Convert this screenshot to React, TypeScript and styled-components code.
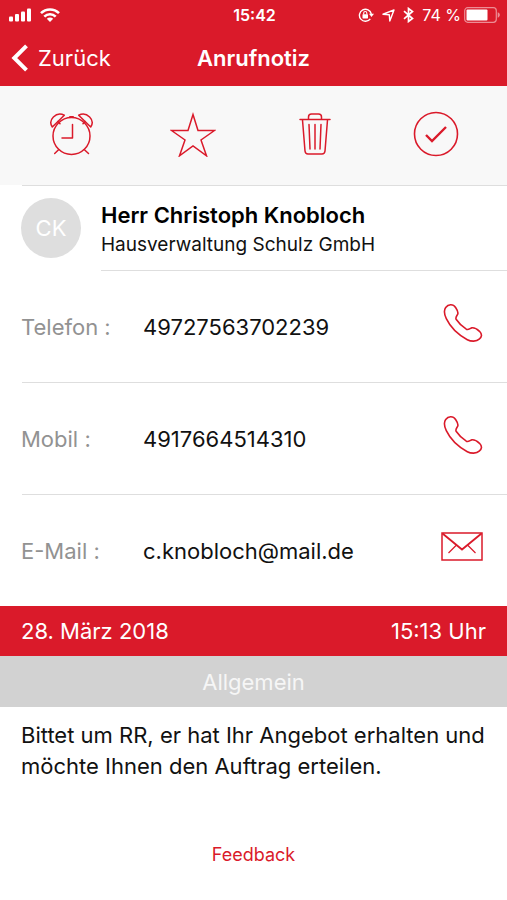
import React from "react";
import styled, { createGlobalStyle } from "styled-components";

const red = "#da1a2a";

const GlobalStyle = createGlobalStyle`
  * { box-sizing: border-box; }
  body {
    margin: 0;
    background: #fff;
    color: #111;
    font-family: Inter, "Liberation Sans", sans-serif;
    font-size: 22px;
  }
  button { font: inherit; color: inherit; background: none; border: 0; padding: 0; cursor: pointer; }
  a { color: inherit; text-decoration: none; }
  h1, h2, p, dl, dd { margin: 0; }
  svg { display: block; }
`;

const Header = styled.header`
  background: ${red};
  color: #fff;
`;

const StatusBar = styled.div`
  display: grid;
  grid-template-columns: 1fr auto 1fr;
  align-items: center;
  height: 30px;
  padding: 0 6px 0 8px;
  font-size: 16px;
`;

const StatusGroup = styled.div<{ $end?: boolean }>`
  display: flex;
  align-items: center;
  gap: 8px;
  justify-content: ${(p) => (p.$end ? "flex-end" : "flex-start")};
`;

const Clock = styled.time`
  font-weight: 600;
`;

const Battery = styled.span`
  display: flex;
  align-items: center;
  gap: 3px;
  white-space: nowrap;
`;

const NavBar = styled.nav`
  display: grid;
  grid-template-columns: 1fr auto 1fr;
  align-items: center;
  height: 56px;
  padding: 0 11px;
`;

const BackButton = styled.button`
  display: flex;
  align-items: center;
  gap: 10px;
  justify-self: start;
`;

const Title = styled.h1`
  font-size: 22px;
  font-weight: 600;
`;

const Toolbar = styled.div`
  display: grid;
  grid-template-columns: repeat(4, 1fr);
  place-items: center;
  height: 99px;
  padding: 0 10px 4px 11px;
  background: #f8f8f8;
`;

const ToolButton = styled.button`
  color: ${red};
`;

const Divider = styled.hr<{ $inset: number }>`
  height: 1px;
  margin: 0 0 0 ${(p) => p.$inset}px;
  border: 0;
  background: #dedede;
`;

const Contact = styled.section`
  display: flex;
  gap: 20px;
  height: 84px;
  padding: 12px 21px 0;
`;

const Avatar = styled.div`
  display: grid;
  place-items: center;
  flex: none;
  width: 60px;
  height: 60px;
  border-radius: 50%;
  background: #dedede;
  color: #fff;
`;

const Name = styled.h2`
  padding-top: 2px;
  font-size: 22px;
  font-weight: 600;
  line-height: 30px;
  color: #000;
`;

const Company = styled.p`
  font-size: 19px;
  line-height: 30px;
`;

const Row = styled.div`
  display: grid;
  grid-template-columns: 122px 1fr auto;
  align-items: center;
  height: 111px;
  padding: 0 24px 0 21px;
`;

const Label = styled.dt`
  color: #929292;
`;

const RowLink = styled.a`
  color: ${red};
  padding-bottom: 8px;
`;

const DateBand = styled.div`
  display: flex;
  align-items: center;
  justify-content: space-between;
  height: 50px;
  padding: 0 21px;
  background: ${red};
  color: #fff;
`;

const Category = styled.div`
  display: grid;
  place-items: center;
  height: 51px;
  background: #d2d2d2;
  color: #f6f6f6;
`;

const Message = styled.p`
  padding: 13px 21px 0;
  line-height: 31px;
`;

const Footer = styled.footer`
  display: flex;
  justify-content: center;
  padding: 61px 0 33px;
`;

const FeedbackButton = styled.button`
  color: ${red};
  font-size: 18px;
  line-height: 24px;
`;

const Signal = () => (
  <svg width="24" height="14" viewBox="0 0 24 14" fill="currentColor" aria-hidden="true">
    <rect x="1" y="8.5" width="4" height="5" rx="1" />
    <rect x="7" y="6" width="4" height="7.500" rx="1" />
    <rect x="13" y="3.500" width="4" height="10" rx="1" />
    <rect x="19" y="0.500" width="4" height="13" rx="1" />
  </svg>
);

const Wifi = () => (
  <svg width="20" height="14" viewBox="0 0 20 14" fill="none" stroke="currentColor" strokeWidth="2.600" aria-hidden="true">
    <path d="M1 5.200C6 .2 14 .2 19 5.200M4.300 8.600C7.500 5.400 12.500 5.400 15.700 8.600" />
    <path d="M10 14 6.800 10.700C8.600 9 11.400 9 13.200 10.700Z" fill="currentColor" stroke="none" />
  </svg>
);

const RotationLock = () => (
  <svg width="16" height="14" viewBox="0 0 16 14" fill="none" stroke="currentColor" strokeWidth="1.400" aria-hidden="true">
    <path d="M12.300 10.800A6 6 0 1 1 13.300 6" />
    <path d="M11 5.700h5l-2.500 3.300Z" fill="currentColor" stroke="none" />
    <rect x="4.500" y="6.200" width="5.500" height="4.200" rx=".6" fill="currentColor" stroke="none" />
    <path d="M5.700 6.500V5a1.550 1.550 0 0 1 3.100 0v1.500" strokeWidth="1.100" />
  </svg>
);

const LocationArrow = () => (
  <svg width="13" height="13" viewBox="0 0 13 13" fill="none" stroke="currentColor" strokeWidth="1.400" strokeLinejoin="round" aria-hidden="true">
    <path d="M12 1 7.800 12 7.300 5.700 1 5.200Z" />
  </svg>
);

const Bluetooth = () => (
  <svg width="11" height="16" viewBox="0 0 11 16" fill="none" stroke="currentColor" strokeWidth="1.700" aria-hidden="true">
    <path d="M1 4.200 9.500 11.500 5.500 14.500V1.500L9.500 4.500 1 11.800" />
  </svg>
);

const BatteryIcon = () => (
  <svg width="37" height="16" viewBox="0 0 37 16" fill="none" aria-hidden="true">
    <rect x=".7" y=".7" width="31.600" height="14.600" rx="3" stroke="#fff" strokeOpacity=".5" strokeWidth="1.200" />
    <rect x="2.500" y="2.500" width="21" height="11" rx="1" fill="#fff" />
    <path d="M33.700 5.300c2.800.8 2.800 4.600 0 5.400Z" fill="#fff" fillOpacity=".5" />
  </svg>
);

const BackChevron = () => (
  <svg width="17" height="28" viewBox="0 0 17 28" fill="none" stroke="currentColor" strokeWidth="4" aria-hidden="true">
    <path d="M15.500 1.800 3.300 14 15.500 26.200" />
  </svg>
);

const Alarm = () => (
  <svg width="46" height="46" viewBox="0 0 46 46" fill="none" stroke="currentColor" strokeWidth="1.500" strokeLinecap="round" strokeLinejoin="round" aria-hidden="true">
    <circle cx="22.500" cy="25" r="18.500" />
    <path d="M23.500 13.500v13.500H13" />
    <path d="M21 6h3" strokeWidth="2" />
    <path d="M3.300 16C-1.500 9 7 .3 15.300 4.200Z" />
    <path d="M41.700 16C46.500 9 38 .3 29.700 4.200Z" />
    <path d="M8.800 10.500 11 12.800M36.200 10.500 34 12.800M9.800 38.500 5.700 42.500M35.200 38.500 39.500 42.500" />
  </svg>
);

const Star = () => (
  <svg width="46" height="46" viewBox="0 0 46 46" fill="none" stroke="currentColor" strokeWidth="1.500" aria-hidden="true">
    <path d="M23 3.500 28 19.500H44.500L31 29 36.500 44.800 23 35 9.500 44.800 15 29 1.500 19.500H18Z" />
  </svg>
);

const Trash = () => (
  <svg width="32" height="44" viewBox="0 0 32 44" fill="none" stroke="currentColor" strokeWidth="1.500" strokeLinecap="round" strokeLinejoin="round" aria-hidden="true">
    <path d="M1 7.500H31M3.500 8 6 39c.2 2 1 3 3 3H23c2 0 2.800-1 3-3L28.500 8" />
    <path d="M9.500 7V5c0-2 1-3 3-3h7c2 0 3 1 3 3v2" />
    <path d="M10 12.500 11 37M16 12.500V37M22 12.500 21 37" />
  </svg>
);

const CheckCircle = () => (
  <svg width="46" height="46" viewBox="0 0 46 46" fill="none" stroke="currentColor" aria-hidden="true">
    <circle cx="23" cy="23" r="21.500" strokeWidth="1.600" />
    <path d="M13 24 19 30 33 16" strokeWidth="2.400" />
  </svg>
);

const Phone = () => (
  <svg width="40" height="40" viewBox="0 0 40 40" fill="none" stroke="currentColor" strokeWidth="1.600" strokeLinejoin="round" aria-hidden="true">
    <path d="M2.700 4.500C5.200 1.200 10 .5 12.600 4.500C14.300 7 15.700 9.400 14.600 11.400C13.800 13 12.300 14.300 13.100 16.200C15.300 19.500 20 24 23.300 26.200C25.200 27.300 26.800 25.500 28.500 24.900C31.500 24.300 34 26 36.500 28.300C39.500 31.400 38.800 34 36.200 36.200C33.500 38.800 28 38.600 24.300 36.700C15.500 32 7.500 24.500 3.300 15.700C1.500 11.900 .8 7.200 2.700 4.500Z" />
  </svg>
);

const Envelope = () => (
  <svg width="42" height="29" viewBox="0 0 42 29" fill="none" stroke="currentColor" strokeWidth="1.500" aria-hidden="true">
    <rect x="1" y="1" width="40" height="27" />
    <path d="M1.500 1.500 21 17.500 40.500 1.500" strokeWidth="1.800" />
    <path d="M15.500 13 7.500 21M26.500 13 34.500 21" strokeWidth="1.200" />
  </svg>
);

const tools = [
  { name: "Wecker", icon: <Alarm /> },
  { name: "Favorit", icon: <Star /> },
  { name: "Löschen", icon: <Trash /> },
  { name: "Erledigt", icon: <CheckCircle /> },
];

const details = [
  { label: "Telefon :", value: "49727563702239", href: "tel:49727563702239", icon: <Phone /> },
  { label: "Mobil :", value: "4917664514310", href: "tel:4917664514310", icon: <Phone /> },
  { label: "E-Mail :", value: "c.knobloch@mail.de", href: "mailto:c.knobloch@mail.de", icon: <Envelope /> },
];

export default function App() {
  return (
    <>
      <GlobalStyle />
      <Header>
        <StatusBar>
          <StatusGroup>
            <Signal />
            <Wifi />
          </StatusGroup>
          <Clock>15:42</Clock>
          <StatusGroup $end>
            <RotationLock />
            <LocationArrow />
            <Bluetooth />
            <Battery>
              74 %
              <BatteryIcon />
            </Battery>
          </StatusGroup>
        </StatusBar>
        <NavBar>
          <BackButton type="button">
            <BackChevron />
            Zurück
          </BackButton>
          <Title>Anrufnotiz</Title>
        </NavBar>
      </Header>
      <main>
        <Toolbar>
          {tools.map((tool) => (
            <ToolButton key={tool.name} type="button" aria-label={tool.name}>
              {tool.icon}
            </ToolButton>
          ))}
        </Toolbar>
        <Divider $inset={22} />
        <Contact>
          <Avatar>CK</Avatar>
          <div>
            <Name>Herr Christoph Knobloch</Name>
            <Company>Hausverwaltung Schulz GmbH</Company>
          </div>
        </Contact>
        <Divider $inset={101} />
        <dl>
          {details.map((detail, index) => (
            <React.Fragment key={detail.label}>
              {index > 0 && <Divider $inset={22} />}
              <Row>
                <Label>{detail.label}</Label>
                <dd>{detail.value}</dd>
                <RowLink href={detail.href} aria-label={detail.value}>
                  {detail.icon}
                </RowLink>
              </Row>
            </React.Fragment>
          ))}
        </dl>
        <DateBand>
          <span>28. März 2018</span>
          <span>15:13 Uhr</span>
        </DateBand>
        <Category>Allgemein</Category>
        <Message>Bittet um RR, er hat Ihr Angebot erhalten und möchte Ihnen den Auftrag erteilen.</Message>
      </main>
      <Footer>
        <FeedbackButton type="button">Feedback</FeedbackButton>
      </Footer>
    </>
  );
}
